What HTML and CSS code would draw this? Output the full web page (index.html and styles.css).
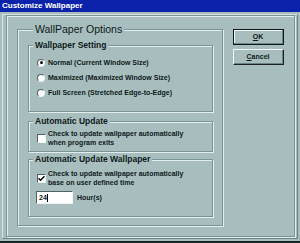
FILE: index.html
```html
<!DOCTYPE html>
<html lang="en">
<head>
<meta charset="utf-8">
<title>Customize Wallpaper</title>
<link rel="stylesheet" href="styles.css">
</head>
<body>
<div class="window">
  <div class="titlebar">Customize Wallpaper</div>
  <div class="client">
    <div class="frame">
      <div class="panel">
        <div class="group options">
          <div class="legend big">WallPaper Options</div>

          <div class="group setting">
            <div class="legend">Wallpaper Setting</div>
            <div class="rows">
              <div class="row"><span class="radio on"></span>Normal (Current Window Size)</div>
              <div class="row"><span class="radio"></span>Maximized (Maximized Window Size)</div>
              <div class="row"><span class="radio"></span>Full Screen (Stretched Edge-to-Edge)</div>
            </div>
          </div>

          <div class="group update">
            <div class="legend">Automatic Update</div>
            <div class="check-row">
              <span class="check"></span>
              <span class="check-text">Check to update wallpaper automatically<br>when program exits</span>
            </div>
          </div>

          <div class="group timed">
            <div class="legend">Automatic Update Wallpaper</div>
            <div class="check-row">
              <span class="check">
                <svg width="7" height="7" viewBox="0 0 7 7"><path d="M0.5 3.2 L2.5 5.2 L6.5 1.2" fill="none" stroke="#000" stroke-width="1.4"/></svg>
              </span>
              <span class="check-text">Check to update wallpaper automatically<br>base on user defined time</span>
            </div>
            <div class="hours">
              <span class="field">24<span class="caret"></span></span>
              <span>Hour(s)</span>
            </div>
          </div>
        </div>

        <div class="buttons">
          <div class="btn default"><span class="btn-face"><u>O</u>K</span></div>
          <div class="btn"><span class="btn-face"><u>C</u>ancel</span></div>
        </div>
      </div>
    </div>
  </div>
</div>
</body>
</html>
```

FILE: styles.css
```css
body
        {
        margin:0;
        font-family:"Liberation Sans", Arial, sans-serif;
        color:#0e1a1a;
        }
.window
        {
        width:300px;
        height:243px;
        box-sizing:border-box;
        background:#a8bebe;
        border-bottom:2px solid #1a2424;
        display:flex;
        flex-direction:column;
        }
.titlebar
        {
        height:12px;
        line-height:12px;
        padding-left:2px;
        background:#0c22aa;
        color:#fff;
        font-weight:bold;
        font-size:8px;
        }
.client
        {
        flex:1;
        display:flex;
        padding:2px 2px 2px 2px;
        }
.frame
        {
        flex:1;
        display:flex;
        padding:0 2px 1px 3px;
        border:1px solid #d6e4e4;
        border-right-color:#6e8484;
        border-bottom-color:#6e8484;
        }
.panel
        {
        flex:1;
        display:flex;
        align-items:flex-start;
        gap:10px;
        padding:13px 0 0 10px;
        border:1px solid #7c9494;
        box-shadow:inset 1px 1px 0 #e2eded, 1px 1px 0 #e2eded;
        }
.group
        {
        box-sizing:border-box;
        display:flex;
        flex-direction:column;
        border:1px solid #7c9494;
        box-shadow:inset 1px 1px 0 #e2eded, 1px 1px 0 #e2eded;
        }
.legend
        {
        align-self:flex-start;
        margin:-6px 0 0 4px;
        padding:0 2px;
        background:#a8bebe;
        font-size:8.5px;
        font-weight:bold;
        line-height:10px;
        }
.legend.big
        {
        margin:-7px 0 0 5px;
        font-size:10.5px;
        font-weight:normal;
        line-height:13px;
        }
.options
        {
        width:206px;
        height:197px;
        padding:0 9px 0 10px;
        }
.setting
        {
        margin-top:9px;
        height:67px;
        }
.update
        {
        margin-top:9px;
        height:31px;
        }
.timed
        {
        margin-top:7px;
        height:58px;
        }
.rows
        {
        margin-top:5px;
        padding-left:8px;
        }
.row
        {
        height:15px;
        display:flex;
        align-items:center;
        gap:3px;
        font-size:7px;
        font-weight:bold;
        }
.radio
        {
        width:8px;
        height:8px;
        box-sizing:border-box;
        border-radius:50%;
        background:#fff;
        border:1px solid #eef4f4;
        border-top-color:#506262;
        border-left-color:#506262;
        display:flex;
        align-items:center;
        justify-content:center;
        }
.radio.on::after
        {
        content:"";
        width:3px;
        height:3px;
        border-radius:50%;
        background:#000;
        }
.check-row
        {
        display:flex;
        align-items:center;
        gap:2px;
        margin-top:3px;
        padding-left:8px;
        }
.timed .check-row
        {
        margin-top:5px;
        }
.check
        {
        width:9px;
        height:9px;
        box-sizing:border-box;
        background:#fff;
        border:1px solid #eef4f4;
        border-top-color:#506262;
        border-left-color:#506262;
        display:flex;
        align-items:center;
        justify-content:center;
        flex-shrink:0;
        }
.check-text
        {
        font-size:7px;
        font-weight:bold;
        line-height:9px;
        }
.hours
        {
        display:flex;
        align-items:center;
        gap:4px;
        margin:4px 0 0 7px;
        font-size:7px;
        font-weight:bold;
        }
.field
        {
        width:37px;
        height:13px;
        box-sizing:border-box;
        padding-left:2px;
        background:#fff;
        border:1px solid #eef4f4;
        border-top-color:#506262;
        border-left-color:#506262;
        display:flex;
        align-items:center;
        }
.caret
        {
        width:1px;
        height:8px;
        background:#000;
        }
.buttons
        {
        display:flex;
        flex-direction:column;
        gap:4px;
        }
.btn
        {
        width:51px;
        height:16px;
        box-sizing:border-box;
        display:flex;
        border:1px solid #f2f8f8;
        border-right-color:#1a2424;
        border-bottom-color:#1a2424;
        }
.btn-face
        {
        flex:1;
        display:flex;
        align-items:center;
        justify-content:center;
        border-right:1px solid #6e8484;
        border-bottom:1px solid #6e8484;
        font-size:7px;
        font-weight:bold;
        }
.btn.default
        {
        border:1px solid #0e1a1a;
        box-shadow:inset 1px 1px 0 #f2f8f8;
        }
```
